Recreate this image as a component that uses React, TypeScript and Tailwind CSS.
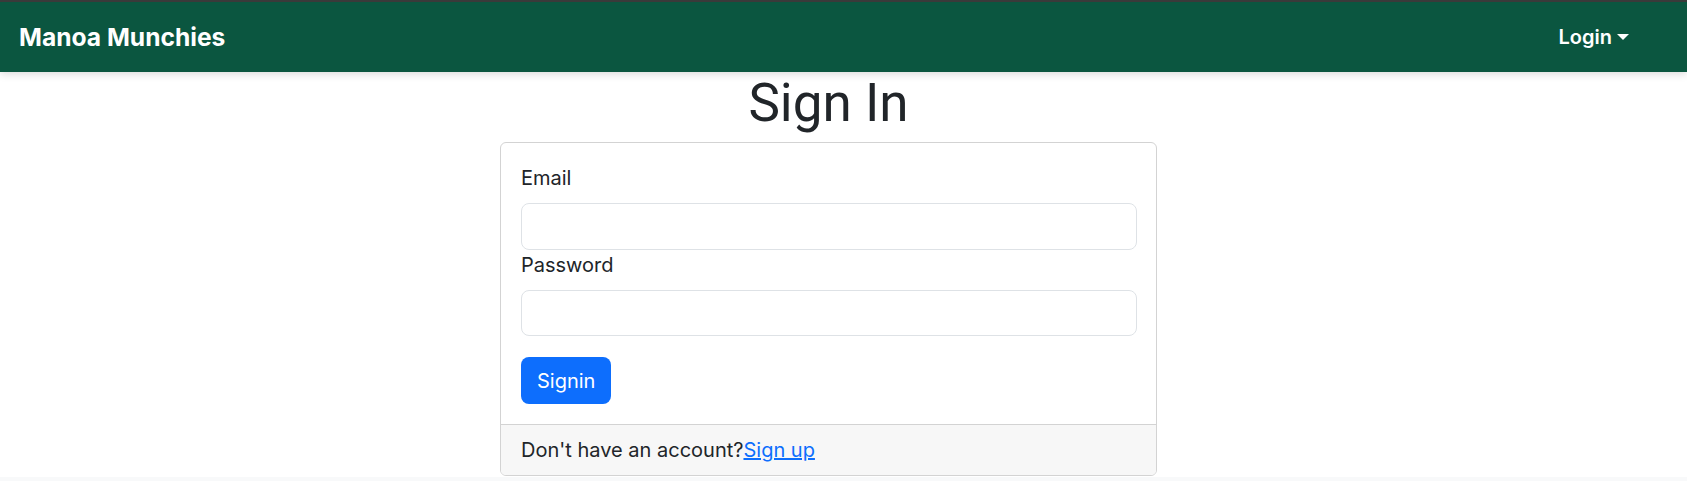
import React from "react";

export default function App() {
  return (
    <div className="min-h-[481px] bg-white text-[#212529]" style={{ fontFamily: "Inter, 'Noto Sans', sans-serif" }}>
      <nav className="relative z-10 flex h-[72px] items-center justify-between border-t-2 border-[#3a3a3a] bg-[#0b5640] pl-[19px] pr-[58px] shadow-[0_2px_8px_rgba(0,0,0,0.15)]">
        <span className="text-[24.6px] font-bold leading-[36px] text-white">Manoa Munchies</span>
        <button className="flex items-center text-[20px] font-semibold leading-[30px] text-white">
          Login
          <span className="ml-[5px] inline-block h-0 w-0 border-x-[6px] border-t-[6px] border-x-transparent border-t-white" />
        </button>
      </nav>
      <main className="flex flex-col pl-[500px]">
        <div className="w-[657px]">
          <h1
            className="text-center text-[53px] font-normal leading-[62px] text-[#212529]"
            style={{ fontFamily: "Roboto, 'Liberation Sans', sans-serif" }}
          >
            Sign In
          </h1>
          <div className="mt-[8px] overflow-hidden rounded-[6px] border border-[#d3d3d3]">
            <div className="flex flex-col pb-[20px] pl-[20px] pr-[19px] pt-[20px]">
              <label className="text-[20px] leading-[30px]">Email</label>
              <input className="mt-[10px] h-[47px] rounded-[8px] border border-[#dee2e6] bg-white px-4 text-[20px] outline-none" />
              <label className="text-[20px] leading-[30px]">Password</label>
              <input type="password" className="mt-[10px] h-[46px] rounded-[8px] border border-[#dee2e6] bg-white px-4 text-[20px] outline-none" />
              <div className="mt-[21px]">
                <button className="h-[47px] rounded-[8px] bg-[#0d6efd] px-4 text-[20px] leading-[30px] text-white">Signin</button>
              </div>
            </div>
            <div className="border-t border-[#d3d3d3] bg-[#f7f7f7] px-[20px] py-[10px] text-[20px] leading-[30px]">
              Don't have an account?<a href="#" className="text-[#0d6efd] underline">Sign up</a>
            </div>
          </div>
        </div>
      </main>
      <footer className="mt-[1px] h-[6px] bg-[#f8f9fa]" />
    </div>
  );
}
